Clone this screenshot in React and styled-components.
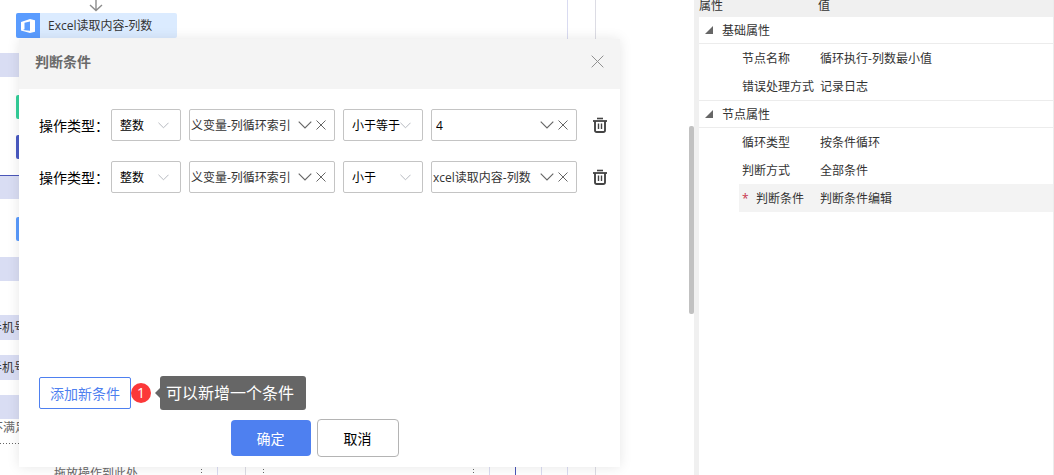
import { useState } from "react";
import styled, { createGlobalStyle } from "styled-components";

const bands = [
    { id: 1, y: 53, h: 24 },
    { id: 2, y: 175, h: 24 },
    { id: 3, y: 257, h: 24 },
    { id: 4, y: 315, h: 25, text: "手机号" },
    { id: 5, y: 355, h: 25, text: "手机号" },
    { id: 6, y: 395, h: 24 },
];

const tags = [
    { id: 1, y: 95, color: "#34d19b" },
    { id: 2, y: 135, color: "#4a5bc4" },
    { id: 3, y: 217, color: "#5a9cff" },
];

const lines = [
    { x: 217, color: "#d9dbf1" },
    { x: 245, color: "#dcdce4" },
    { x: 489, color: "#d9dbf1" },
    { x: 515, color: "#4a56b8" },
    { x: 541, color: "#d9dbf1" },
    { x: 567, color: "#d9dbf1" },
    { x: 595, color: "#dcdce4" },
];

const groups = [
    {
        title: "基础属性",
        rows: [
            { name: "节点名称", value: "循环执行-列数最小值" },
            { name: "错误处理方式", value: "记录日志" },
        ],
    },
    {
        title: "节点属性",
        rows: [
            { name: "循环类型", value: "按条件循环" },
            { name: "判断方式", value: "全部条件" },
            { name: "判断条件", value: "判断条件编辑", required: true, active: true },
        ],
    },
];

const firstConditions = [
    { id: 1, type: "整数", left: "义变量-列循环索引", operator: "小于等于", right: "4", constant: true },
    { id: 2, type: "整数", left: "义变量-列循环索引", operator: "小于", right: "xcel读取内容-列数" },
];

function Chevron({ width = 12, height = 7 }) {
    return (
        <svg width={width} height={height} viewBox="0 0 12 7" fill="none" stroke="currentColor">
            <path d="M0.5 0.5 L6 6 L11.5 0.5" />
        </svg>
    );
}

function Cross({ size = 10 }) {
    return (
        <svg width={size} height={size} viewBox="0 0 10 10" fill="none" stroke="currentColor">
            <path d="M0.5 0.5 L9.5 9.5 M9.5 0.5 L0.5 9.5" vectorEffect="non-scaling-stroke" />
        </svg>
    );
}

function Trash() {
    return (
        <svg width="14" height="16" viewBox="0 0 14 16" fill="none" stroke="currentColor">
            <path d="M4 1.5 H10" strokeWidth="1.6" />
            <path d="M0 4 H14" strokeWidth="1.8" />
            <path d="M2 4 V13.2 Q2 15 3.8 15 H10.2 Q12 15 12 13.2 V4" strokeWidth="1.9" />
            <path d="M5.5 6.5 V12 M8.5 6.5 V12" strokeWidth="1.4" />
        </svg>
    );
}

function OfficeLogo() {
    return (
        <svg width="16" height="16" viewBox="0 0 16 16">
            <path
                fill="#ffffff"
                fillRule="evenodd"
                d="M1 4 L10 1 L15 2.2 V13.8 L10 15 L1 12.5 Z M4.5 4.8 L10 3.4 V12.8 L3 12 L4.5 11.2 Z"
            />
        </svg>
    );
}

function Picker({ value, onChange, label, constant }) {
    return (
        <PickerBox $constant={constant}>
            <input aria-label={label} value={value} onChange={(e) => onChange(e.target.value)} />
            <button type="button" aria-label="展开">
                <Chevron width={14} height={8} />
            </button>
            <button type="button" aria-label="清空" onClick={() => onChange("")}>
                <Cross />
            </button>
        </PickerBox>
    );
}

function Choice({ id, label, value, options, wide, onChange }) {
    return (
        <ChoiceBox $wide={wide}>
            <select id={id} aria-label={label} value={value} onChange={(e) => onChange(e.target.value)}>
                {options.map((option) => (
                    <option key={option}>{option}</option>
                ))}
            </select>
            <Chevron width={11} height={7} />
        </ChoiceBox>
    );
}

function Properties() {
    return (
        <Panel>
            <PropertyTable>
                <colgroup>
                    <col className="gutter" />
                    <col className="name" />
                    <col />
                </colgroup>
                <thead>
                    <tr>
                        <th colSpan={2}>属性</th>
                        <th>值</th>
                    </tr>
                </thead>
                {groups.map((group) => (
                    <tbody key={group.title}>
                        <GroupRow>
                            <th colSpan={3}>
                                <svg width="8" height="8" viewBox="0 0 8 8">
                                    <path d="M8 0 V8 H0 Z" fill="#666666" />
                                </svg>
                                {group.title}
                            </th>
                        </GroupRow>
                        {group.rows.map((row) => (
                            <PropertyRow key={row.name} $active={row.active}>
                                <td />
                                <td>
                                    {row.required && <Star>*</Star>}
                                    {row.name}
                                </td>
                                <td>{row.value}</td>
                            </PropertyRow>
                        ))}
                    </tbody>
                ))}
            </PropertyTable>
        </Panel>
    );
}

export default function App() {
    const [conditions, setConditions] = useState(firstConditions);

    function change(id, field, value) {
        setConditions(conditions.map((c) => (c.id === id ? { ...c, [field]: value } : c)));
    }

    function remove(id) {
        setConditions(conditions.filter((c) => c.id !== id));
    }

    function add() {
        setConditions([...conditions, { id: Date.now(), type: "整数", left: "", operator: "小于", right: "" }]);
    }

    return (
        <Page>
            <GlobalStyle />
            <Canvas>
                <Connectors>
                    {lines.map((line) => (
                        <path key={line.x} d={`M${line.x + 0.5} 460 V2000`} stroke={line.color} />
                    ))}
                    <path d="M567.5 0 V60" stroke="#d9dbf1" />
                    <path d="M595.5 0 V60" stroke="#dcdce4" />
                    <path d="M201.5 460 V2000 M263.5 460 V2000 M473.5 460 V2000 M0 443.5 H19" stroke="#666666" strokeDasharray="1 2" />
                    <path d="M96 0 V10 M90 5 L96 10.5 L102 5" stroke="#8c8c8c" strokeWidth="1.4" />
                </Connectors>
                {bands.map((band) => (
                    <Band key={band.id} $y={band.y} $h={band.h}>{band.text}</Band>
                ))}
                {tags.map((tag) => (
                    <Tag key={tag.id} $y={tag.y} $color={tag.color} />
                ))}
                <Connectors>
                    <path d="M0 175.5 H30" stroke="#4a56b8" />
                </Connectors>
                <FlowNode>
                    <i><OfficeLogo /></i>
                    <span>Excel读取内容-列数</span>
                </FlowNode>
                <Note $x={-9} $y={419}>不满足</Note>
                <Note $x={54} $y={465}>拖放操作到此处</Note>
                <ScrollThumb />

                <Dialog role="dialog" aria-labelledby="dialog-title">
                    <DialogHeader>
                        <h2 id="dialog-title">判断条件</h2>
                        <IconButton type="button" aria-label="关闭">
                            <Cross size={13} />
                        </IconButton>
                    </DialogHeader>
                    <DialogBody>
                        <Conditions>
                            {conditions.map((c) => (
                                <Condition key={c.id}>
                                    <label htmlFor={`type-${c.id}`}>操作类型：</label>
                                    <Choice
                                        id={`type-${c.id}`}
                                        value={c.type}
                                        options={["整数", "小数", "文本"]}
                                        onChange={(v) => change(c.id, "type", v)}
                                    />
                                    <Picker label="变量" value={c.left} onChange={(v) => change(c.id, "left", v)} />
                                    <Choice
                                        wide
                                        label="比较方式"
                                        value={c.operator}
                                        options={["小于等于", "小于", "等于", "大于"]}
                                        onChange={(v) => change(c.id, "operator", v)}
                                    />
                                    <Picker
                                        label="比较值"
                                        value={c.right}
                                        constant={c.constant}
                                        onChange={(v) => change(c.id, "right", v)}
                                    />
                                    <DeleteButton type="button" aria-label="删除" onClick={() => remove(c.id)}>
                                        <Trash />
                                    </DeleteButton>
                                </Condition>
                            ))}
                        </Conditions>
                        <AddRow>
                            <AddButton type="button" onClick={add}>添加新条件</AddButton>
                            <Badge>1</Badge>
                            <Tip>可以新增一个条件</Tip>
                        </AddRow>
                    </DialogBody>
                    <DialogFooter>
                        <ConfirmButton type="button">确定</ConfirmButton>
                        <CancelButton type="button">取消</CancelButton>
                    </DialogFooter>
                </Dialog>
            </Canvas>
            <Splitter />
            <Properties />
        </Page>
    );
}

const GlobalStyle = createGlobalStyle`
    *{
        box-sizing: border-box;
    }
    body{
        margin: 0;
        background-color: #ffffff;
        font-family: "Open Sans", "Noto Sans CJK SC", sans-serif;
        font-size: 12px;
        color: #333333;
    }
    button, input, select{
        font-family: inherit;
        margin: 0;
    }
    button{
        cursor: pointer;
    }
    svg{
        display: block;
        flex-shrink: 0;
    }
`

const Page = styled.div`
    display: flex;
    min-height: 100vh;
`

const Canvas = styled.main`
    flex: 1;
    min-width: 0;
    position: relative;
    overflow: hidden;
`

const Connectors = styled.svg`
    position: absolute;
    top: 0;
    left: 0;
    width: 100%;
    height: 100%;
    fill: none;
`

const Band = styled.div`
    position: absolute;
    left: -10px;
    top: ${(props) => props.$y}px;
    width: 60px;
    height: ${(props) => props.$h}px;
    line-height: 26px;
    background-color: #d9ddf3;
`

const Tag = styled.div`
    position: absolute;
    left: 16px;
    top: ${(props) => props.$y}px;
    width: 24px;
    height: 24px;
    border-radius: 2px;
    background-color: ${(props) => props.$color};
`

const FlowNode = styled.div`
    position: absolute;
    left: 16px;
    top: 13px;
    display: flex;
    width: 161px;
    height: 25px;
    background-color: #dbebff;
    border-radius: 2px;
    line-height: 26px;
    i{
        display: flex;
        align-items: center;
        justify-content: center;
        width: 24px;
        background-color: #5a9cff;
        border-radius: 2px 0 0 2px;
    }
    span{
        padding-left: 8px;
    }
`

const Note = styled.div`
    position: absolute;
    left: ${(props) => props.$x}px;
    top: ${(props) => props.$y}px;
    line-height: 18px;
    color: #666666;
    white-space: nowrap;
`

const ScrollThumb = styled.div`
    position: absolute;
    right: 0;
    top: 126px;
    width: 5px;
    height: 188px;
    border-radius: 2px;
    background-color: #c1c1c1;
`

const Dialog = styled.section`
    position: absolute;
    left: 19px;
    top: 39px;
    width: 601px;
    background-color: #ffffff;
    box-shadow: 0 0 12px rgba(0, 0, 0, 0.1);
`

const DialogHeader = styled.header`
    display: flex;
    align-items: center;
    justify-content: space-between;
    height: 50px;
    padding: 0 16px 6px;
    background-color: #f4f4f4;
    h2{
        margin: 0;
        font-size: 14px;
        font-weight: 700;
        color: #6a6a6a;
    }
`

const IconButton = styled.button`
    display: flex;
    padding: 0;
    border: none;
    background: none;
    color: #909090;
`

const DialogBody = styled.div`
    padding: 20px 12px 9px 20px;
`

const Conditions = styled.div`
    display: flex;
    flex-direction: column;
    gap: 20px;
    min-height: 267px;
`

const Condition = styled.div`
    display: flex;
    align-items: center;
    gap: 8px;
    label{
        width: 64px;
        font-size: 14px;
        color: #000000;
        white-space: nowrap;
    }
`

const ChoiceBox = styled.div`
    position: relative;
    width: ${(props) => (props.$wide ? "80px" : "70px")};
    color: #b0b3ba;
    select{
        appearance: none;
        width: 100%;
        height: 32px;
        padding: 0 8px;
        border: 1px solid #c4c4c4;
        border-radius: 2px;
        background-color: transparent;
        font-size: 12px;
        color: #000000;
    }
    svg{
        position: absolute;
        right: 12px;
        top: 13px;
        pointer-events: none;
    }
`

const PickerBox = styled.div`
    display: flex;
    align-items: center;
    gap: 4px;
    width: 146px;
    height: 32px;
    padding: 0 8px 0 ${(props) => (props.$constant ? "4px" : "1px")};
    border: 1px solid #c4c4c4;
    border-radius: 2px;
    input{
        flex: 1;
        min-width: 0;
        padding: 0;
        border: none;
        outline: none;
        background: none;
        font-size: 12px;
        color: ${(props) => (props.$constant ? "#000000" : "#333333")};
    }
    button{
        display: flex;
        padding: 0;
        border: none;
        background: none;
        color: #666666;
    }
`

const DeleteButton = styled(IconButton)`
    padding-left: 8px;
    color: #444444;
`

const AddRow = styled.div`
    display: flex;
    align-items: center;
`

const AddButton = styled.button`
    width: 92px;
    height: 32px;
    padding: 0;
    border: 1px solid #4e80f0;
    border-radius: 2px;
    background-color: #ffffff;
    font-size: 14px;
    color: #4e80f0;
`

const Badge = styled.span`
    width: 20px;
    height: 20px;
    border-radius: 50%;
    background-color: #fc3839;
    color: #ffffff;
    font-size: 14px;
    line-height: 20px;
    text-align: center;
`

const Tip = styled.div`
    position: relative;
    margin-left: 9px;
    padding: 0 12px 0 6px;
    border-radius: 3px;
    background-color: #666666;
    color: #ffffff;
    font-size: 16px;
    line-height: 34px;
    &::before{
        content: "";
        position: absolute;
        left: -5px;
        top: 12px;
        border: 5px solid transparent;
        border-left: none;
        border-right-color: #666666;
    }
`

const DialogFooter = styled.footer`
    display: flex;
    align-items: center;
    justify-content: center;
    gap: 6px;
    padding: 0 10px 10px 0;
    button{
        font-size: 14px;
        border-radius: 4px;
    }
`

const ConfirmButton = styled.button`
    width: 80px;
    height: 36px;
    border: none;
    background-color: #4e80f0;
    color: #ffffff;
`

const CancelButton = styled.button`
    width: 82px;
    height: 38px;
    border: 1px solid #b4b4b4;
    background-color: #ffffff;
    color: #000000;
`

const Splitter = styled.div`
    width: 5px;
    background-color: #f0f0f0;
`

const Panel = styled.aside`
    width: 355px;
    border-right: 1px solid #ececec;
`

const PropertyTable = styled.table`
    width: 100%;
    table-layout: fixed;
    border-spacing: 0;
    .gutter{
        width: 40px;
    }
    .name{
        width: 79px;
    }
    th, td{
        padding: 0;
        font-weight: 400;
        text-align: left;
        white-space: nowrap;
    }
    thead th{
        height: 17px;
        padding-bottom: 5px;
        line-height: 12px;
        background-color: #f0f0f0;
    }
    tbody:not(:last-child) tr:last-child td{
        border-bottom: 1px solid #ececec;
    }
`

const GroupRow = styled.tr`
    th{
        height: 27px;
        padding: 2px 0 0 23px;
        line-height: 24px;
        border-bottom: 1px solid #ececec;
    }
    svg{
        float: left;
        margin: 7px 0 0 -17px;
    }
`

const PropertyRow = styled.tr`
    td{
        height: 28px;
        padding: 2px 0 0 3px;
        line-height: 26px;
    }
    td:last-child{
        padding-left: 2px;
    }
    td:not(:first-child){
        background-color: ${(props) => (props.$active ? "#f3f3f3" : "transparent")};
    }
`

const Star = styled.span`
    display: inline-block;
    width: 14px;
    color: #c8324b;
`
